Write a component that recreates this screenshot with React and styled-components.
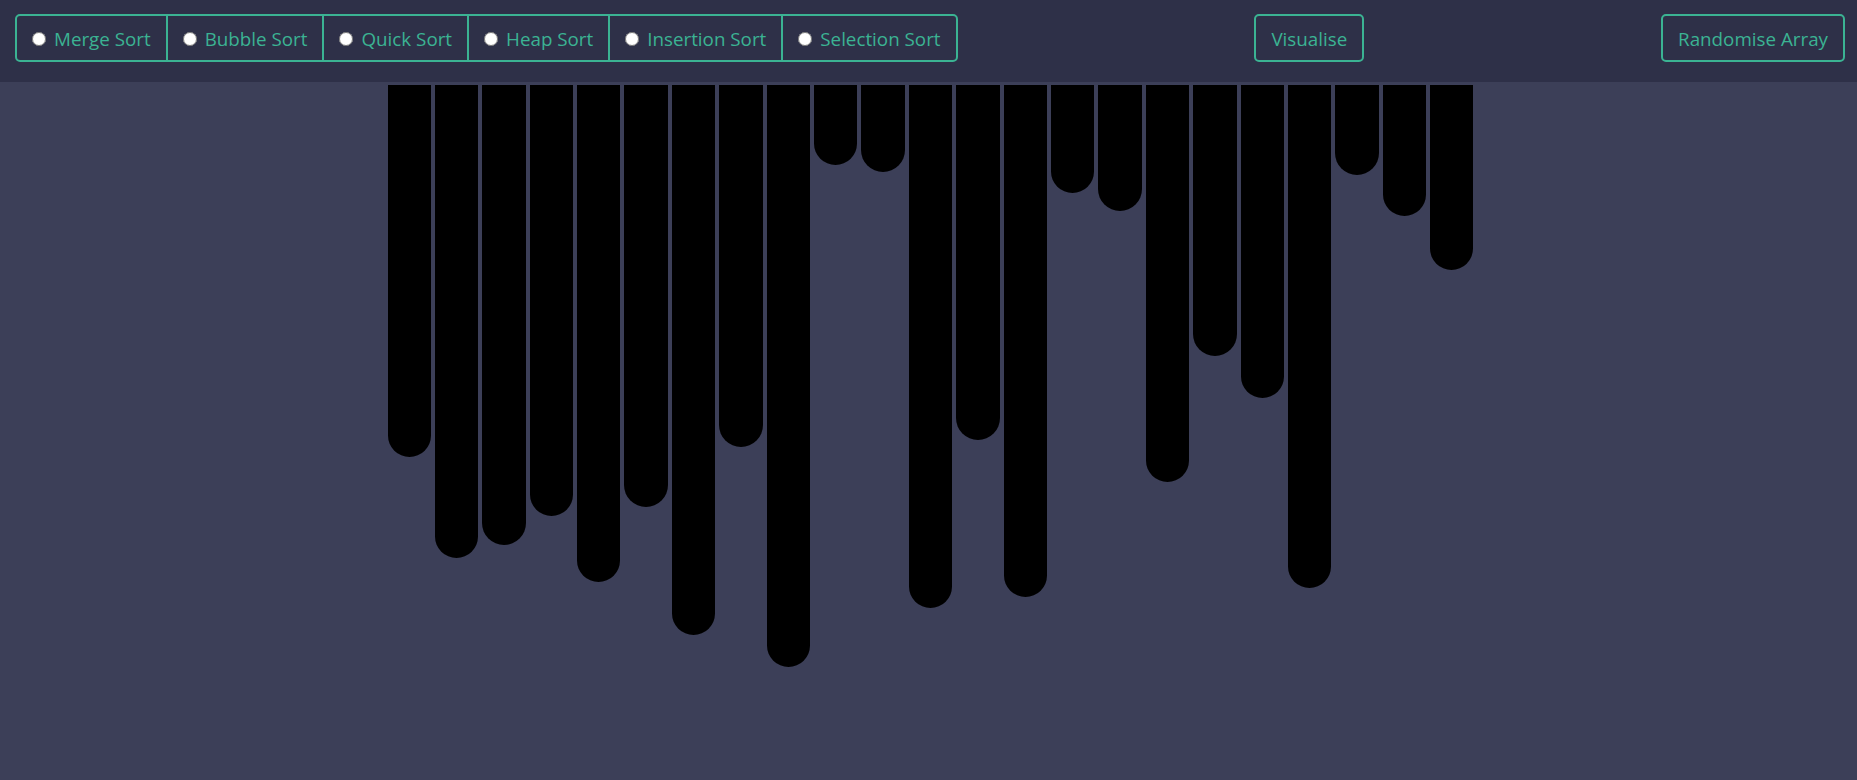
import React from 'react'
import styled, { createGlobalStyle } from 'styled-components'

const GlobalStyle = createGlobalStyle`
  html, body {
    margin: 0;
    padding: 0;
    background: #3c3f58;
    font-family: "Open Sans", "Noto Sans", sans-serif;
  }
`

const ALGORITHMS = [
  'Merge Sort',
  'Bubble Sort',
  'Quick Sort',
  'Heap Sort',
  'Insertion Sort',
  'Selection Sort',
]

const VALUES = [
  372, 473, 460, 431, 497, 422, 550, 362, 582, 80, 87, 523,
  355, 512, 108, 126, 397, 271, 313, 503, 90, 131, 185,
]

const Page = styled.div`
  min-height: 100vh;
  background: #3c3f58;
`

const Toolbar = styled.div`
  height: 82px;
  box-sizing: border-box;
  background: #2e3048;
  display: flex;
  align-items: flex-start;
  justify-content: space-between;
  padding: 14px 12px 0 15px;
`

const RadioGroup = styled.div`
  display: flex;
  height: 48px;
  box-sizing: border-box;
  border: 2px solid #3bb393;
  border-radius: 5px;
`

const Option = styled.label`
  display: flex;
  align-items: center;
  padding: 1px 15px 0 10px;
  color: #3bb393;
  font-size: 18.8px;
  cursor: pointer;
  border-right: ${(p) => (p.last ? 'none' : '2px solid #3bb393')};

  input {
    margin: 0 8px 0 5px;
    width: 14px;
    height: 14px;
  }
`

const Button = styled.button`
  height: 48px;
  box-sizing: border-box;
  padding: 1px 15px 0;
  background: transparent;
  border: 2px solid #3bb393;
  border-radius: 5px;
  color: #3bb393;
  font-family: inherit;
  font-size: 18.8px;
  cursor: pointer;
`

const BarRow = styled.div`
  display: flex;
  justify-content: center;
  align-items: flex-start;
  gap: 4px;
  padding-left: 4px;
  margin-top: 3px;
`

const Bar = styled.div`
  width: 43.4px;
  background: #000;
  border-radius: 0 0 22px 22px;
`

export default function App() {
  const [algo, setAlgo] = React.useState(null)

  return (
    <Page>
      <GlobalStyle />
      <Toolbar>
        <RadioGroup>
          {ALGORITHMS.map((name, i) => (
            <Option key={name} last={i === ALGORITHMS.length - 1}>
              <input
                type="radio"
                name="algorithm"
                checked={algo === name}
                onChange={() => setAlgo(name)}
              />
              {name}
            </Option>
          ))}
        </RadioGroup>
        <Button>Visualise</Button>
        <Button>Randomise Array</Button>
      </Toolbar>
      <BarRow>
        {VALUES.map((v, i) => (
          <Bar key={i} style={{ height: v }} />
        ))}
      </BarRow>
    </Page>
  )
}
